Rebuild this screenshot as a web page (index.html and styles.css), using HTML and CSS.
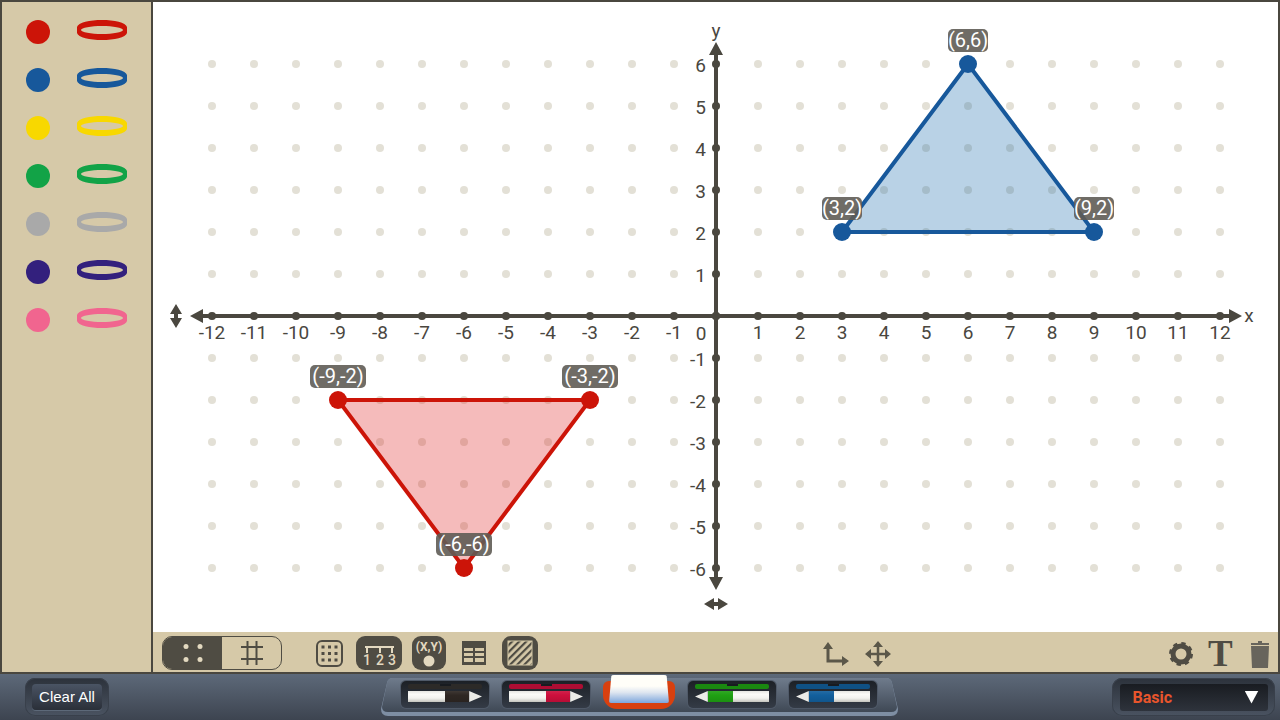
FILE: index.html
```html
<!DOCTYPE html>
<html lang="en">

<head>
    <meta charset="UTF-8">
    <title>Coordinate Graph</title>
    <link rel="stylesheet" href="styles.css">
</head>

<body>
    <svg class="defs" width="0" height="0">
        <defs>
            <symbol id="ring" viewBox="0 0 50 20">
                <path fill="currentColor" fill-rule="evenodd" d="M0 7C1 2.500 13 0 25 0S49 2.500 50 7V13C49 17.500 37 20 25 20S1 17.500 0 13ZM4 10C4 7.800 14 6 25 6S46 7.800 46 10C46 12.200 36 14 25 14S4 12.200 4 10Z"/>
            </symbol>
        </defs>
    </svg>

    <div class="workspace">
        <!-- Colour palette -->
        <div class="palette">
            <div class="swatch red"><span class="dot"></span><svg class="ring"><use href="#ring"/></svg></div>
            <div class="swatch blue"><span class="dot"></span><svg class="ring"><use href="#ring"/></svg></div>
            <div class="swatch yellow"><span class="dot"></span><svg class="ring"><use href="#ring"/></svg></div>
            <div class="swatch green"><span class="dot"></span><svg class="ring"><use href="#ring"/></svg></div>
            <div class="swatch gray"><span class="dot"></span><svg class="ring"><use href="#ring"/></svg></div>
            <div class="swatch purple"><span class="dot"></span><svg class="ring"><use href="#ring"/></svg></div>
            <div class="swatch pink"><span class="dot"></span><svg class="ring"><use href="#ring"/></svg></div>
        </div>

        <div class="main">
            <!-- Graph, viewBox uses page coordinates -->
            <svg class="graph" viewBox="153 2 1125 630">
                <defs>
                    <pattern id="grid-dots" x="191" y="43" width="42" height="42" patternUnits="userSpaceOnUse">
                        <circle cx="21" cy="21" r="4" fill="#e3e0d6"/>
                    </pattern>
                    <pattern id="x-ticks" x="191" y="306" width="42" height="20" patternUnits="userSpaceOnUse">
                        <circle cx="21" cy="10" r="4" fill="#4a473f"/>
                    </pattern>
                    <pattern id="y-ticks" x="706" y="43" width="20" height="42" patternUnits="userSpaceOnUse">
                        <circle cx="10" cy="21" r="4" fill="#4a473f"/>
                    </pattern>
                </defs>

                <rect x="191" y="43" width="1050" height="546" fill="url(#grid-dots)"/>

                <polygon class="tri-blue" points="968,64 842,232 1094,232"/>
                <polygon class="tri-red" points="338,400 590,400 464,568"/>

                <!-- Axes -->
                <rect x="191" y="306" width="1050" height="20" fill="url(#x-ticks)"/>
                <rect x="706" y="43" width="20" height="546" fill="url(#y-ticks)"/>
                <path class="axis" d="M198 316H1234M716 50V582"/>
                <path class="arrow" d="M190 316L203 309V323ZM1242 316L1229 309V323ZM716 42L709 55H723ZM716 590L709 577H723Z"/>
                <path class="arrow" d="M176 304L182 314H178V318H182L176 328L170 318H174V314H170ZM704 604L714 598V602H718V598L728 604L718 610V606H714V610Z"/>

                <g class="nums-x">
                    <text x="212" y="339">-12</text><text x="254" y="339">-11</text><text x="296" y="339">-10</text>
                    <text x="338" y="339">-9</text><text x="380" y="339">-8</text><text x="422" y="339">-7</text>
                    <text x="464" y="339">-6</text><text x="506" y="339">-5</text><text x="548" y="339">-4</text>
                    <text x="590" y="339">-3</text><text x="632" y="339">-2</text><text x="674" y="339">-1</text>
                    <text x="701" y="340">0</text>
                    <text x="758" y="339">1</text><text x="800" y="339">2</text><text x="842" y="339">3</text>
                    <text x="884" y="339">4</text><text x="926" y="339">5</text><text x="968" y="339">6</text>
                    <text x="1010" y="339">7</text><text x="1052" y="339">8</text><text x="1094" y="339">9</text>
                    <text x="1136" y="339">10</text><text x="1178" y="339">11</text><text x="1220" y="339">12</text>
                    <text x="1249" y="322">x</text>
                    <text x="716" y="37">y</text>
                </g>
                <g class="nums-y">
                    <text x="706" y="72">6</text><text x="706" y="114">5</text><text x="706" y="156">4</text>
                    <text x="706" y="198">3</text><text x="706" y="240">2</text><text x="706" y="282">1</text>
                    <text x="706" y="366">-1</text><text x="706" y="408">-2</text><text x="706" y="450">-3</text>
                    <text x="706" y="492">-4</text><text x="706" y="534">-5</text><text x="706" y="576">-6</text>
                </g>

                <g class="pts-blue">
                    <circle cx="968" cy="64" r="9"/><circle cx="842" cy="232" r="9"/><circle cx="1094" cy="232" r="9"/>
                </g>
                <g class="pts-red">
                    <circle cx="338" cy="400" r="9"/><circle cx="590" cy="400" r="9"/><circle cx="464" cy="568" r="9"/>
                </g>

                <g class="point-labels">
                    <rect x="948" y="29" width="40" height="23" rx="5"/><text x="968" y="47">(6,6)</text>
                    <rect x="822" y="197" width="40" height="23" rx="5"/><text x="842" y="215">(3,2)</text>
                    <rect x="1074" y="197" width="40" height="23" rx="5"/><text x="1094" y="215">(9,2)</text>
                    <rect x="310" y="365" width="56" height="23" rx="5"/><text x="338" y="383">(-9,-2)</text>
                    <rect x="562" y="365" width="56" height="23" rx="5"/><text x="590" y="383">(-3,-2)</text>
                    <rect x="436" y="533" width="56" height="23" rx="5"/><text x="464" y="551">(-6,-6)</text>
                </g>
            </svg>

            <!-- Graph tools -->
            <div class="toolbar">
                <div class="seg">
                    <div class="seg-item active">
                        <svg width="24" height="20" viewBox="0 0 24 20"><circle cx="5" cy="3.500" r="2.500"/><circle cx="19" cy="3.500" r="2.500"/><circle cx="5" cy="16.500" r="2.500"/><circle cx="19" cy="16.500" r="2.500"/></svg>
                    </div>
                    <div class="seg-item">
                        <svg width="24" height="24" viewBox="0 0 24 24"><path d="M7.500 0V24M16.500 0V24M1 6H23M1 18H23"/></svg>
                    </div>
                </div>

                <svg class="tool t-grid" width="27" height="34" viewBox="0 0 27 34">
                    <rect x="1" y="5" width="25" height="25" rx="5" fill="none" stroke="#4f4c43" stroke-width="2"/>
                    <path stroke="#4f4c43" stroke-width="3" stroke-dasharray="3 3.500" d="M5.500 11H22M5.500 17.500H22M5.500 24H22"/>
                </svg>

                <svg class="tool t-ruler" width="46" height="34" viewBox="0 0 46 34">
                    <rect width="46" height="34" rx="9" fill="#4f4c43"/>
                    <path stroke="#e3d9c0" stroke-width="2" fill="none" d="M9 11H38M11 11V17M24 11V17M36 11V17"/>
                    <text class="tool-num" x="11" y="29">1</text><text class="tool-num" x="24" y="29">2</text><text class="tool-num" x="36" y="29">3</text>
                </svg>

                <svg class="tool t-xy" width="34" height="34" viewBox="0 0 34 34">
                    <rect width="34" height="34" rx="9" fill="#4f4c43"/>
                    <text class="tool-xy" x="17" y="15">(X,Y)</text>
                    <circle cx="17" cy="25" r="5.500" fill="#e3d9c0"/>
                </svg>

                <svg class="tool t-table" width="24" height="34" viewBox="0 0 24 34">
                    <rect y="5" width="24" height="24" fill="#4f4c43"/>
                    <path fill="#d6c9a8" d="M2 12H11V15H2ZM13 12H22V15H13ZM2 17H11V20H2ZM13 17H22V20H13ZM2 22H11V26H2ZM13 22H22V26H13Z"/>
                </svg>

                <svg class="tool t-hatch" width="36" height="34" viewBox="0 0 36 34">
                    <defs>
                        <pattern id="hatch" width="5" height="5" patternUnits="userSpaceOnUse" patternTransform="rotate(45)">
                            <rect width="5" height="5" fill="#d6c9a8"/>
                            <rect width="2.200" height="5" fill="#4f4c43"/>
                        </pattern>
                    </defs>
                    <rect width="36" height="34" rx="9" fill="#4f4c43"/>
                    <rect x="6" y="5" width="24" height="24" fill="url(#hatch)" stroke="#d6c9a8" stroke-width="1"/>
                </svg>

                <svg class="tool t-axes" width="28" height="34" viewBox="0 0 28 34">
                    <path fill="none" stroke="#5b5749" stroke-width="3" d="M5 10V25H21"/>
                    <path fill="#5b5749" d="M5 6L10 13H0ZM26 25L19 20V30Z"/>
                </svg>

                <svg class="tool t-move" width="28" height="34" viewBox="0 0 28 34">
                    <path fill="none" stroke="#5b5749" stroke-width="2.500" d="M14 8V28M4 18H24"/>
                    <path fill="#5b5749" d="M14 5L19 11H9ZM14 31L19 25H9ZM1 18L7 13V23ZM27 18L21 13V23Z"/>
                </svg>

                <div class="tools-right">
                    <svg width="24" height="34" viewBox="0 0 24 34">
                        <circle cx="12" cy="18" r="8" fill="none" stroke="#4f4c43" stroke-width="5"/>
                        <circle cx="12" cy="18" r="10.500" fill="none" stroke="#4f4c43" stroke-width="3" stroke-dasharray="4.200 4.047"/>
                    </svg>
                    <span class="text-tool">T</span>
                    <svg width="20" height="34" viewBox="0 0 20 34">
                        <path fill="#67645c" d="M8 5H12V7H19V9H1V7H8ZM1 10H19L18 32H2Z"/>
                    </svg>
                </div>
            </div>
        </div>
    </div>

    <!-- Bottom bar -->
    <div class="bottom-bar">
        <div class="clear-wrap"><button class="clear-btn" type="button">Clear All</button></div>

        <div class="tray">
            <svg class="tray-bg" width="517" height="40" viewBox="0 0 517 40">
                <defs>
                    <linearGradient id="tray-fill" x1="0" y1="0" x2="0" y2="1">
                        <stop offset="0" stop-color="#6f7b8c"/>
                        <stop offset="1" stop-color="#3f4855"/>
                    </linearGradient>
                </defs>
                <path fill="#7e8ea3" d="M12 1H505Q510 1 511 6L517 32Q517 39 510 39H7Q0 39 0 32L6 6Q7 1 12 1Z"/>
                <path fill="url(#tray-fill)" d="M12 1H505Q510 1 511 6L516 30Q516 35 510 35H7Q1 35 1 30L6 6Q7 1 12 1Z"/>
            </svg>
            <div class="slot black">
                <span class="cap"></span>
                <div class="pen"><span class="barrel"></span><span class="band"></span><span class="tip"></span></div>
            </div>
            <div class="slot crimson">
                <span class="cap"></span>
                <div class="pen"><span class="barrel"></span><span class="band"></span><span class="tip"></span></div>
            </div>
            <div class="eraser-slot"><div class="eraser"></div></div>
            <div class="slot lime">
                <span class="cap"></span>
                <div class="pen flip"><span class="barrel"></span><span class="band"></span><span class="tip"></span></div>
            </div>
            <div class="slot ocean">
                <span class="cap"></span>
                <div class="pen flip"><span class="barrel"></span><span class="band"></span><span class="tip"></span></div>
            </div>
        </div>

        <div class="select-wrap">
            <div class="select-box">
                <span class="select-label">Basic</span>
                <span class="select-arrow"></span>
            </div>
        </div>
    </div>
</body>
</html>
```

FILE: styles.css
```css
/* General Styling */
body {
    margin: 0;
    width: 1280px;
    height: 720px;
    overflow: hidden;
    font-family: "Liberation Sans", Arial, sans-serif;
    background-color: #3f4753;
}

.defs {
    position: absolute;
}

.workspace {
    display: flex;
    box-sizing: border-box;
    height: 674px;
    border: 2px solid #4a473f;
    background-color: #d6c9a8;
}

/* Palette */
.palette {
    width: 149px;
    flex-shrink: 0;
    padding-top: 6px;
    border-right: 2px solid #4a473f;
}

.swatch {
    display: flex;
    align-items: center;
    height: 48px;
    padding-left: 24px;
}

.swatch .dot {
    width: 24px;
    height: 24px;
    border-radius: 50%;
    background-color: currentColor;
}

.swatch .ring {
    width: 50px;
    height: 20px;
    margin: -4px 0 0 27px;
}

.red { color: #cc1408; }
.blue { color: #17589b; }
.yellow { color: #f8d800; }
.green { color: #12a347; }
.gray { color: #a9a9a9; }
.purple { color: #33207d; }
.pink { color: #f1658f; }

/* Graph */
.main {
    flex: 1;
    display: flex;
    flex-direction: column;
    min-width: 0;
}

.graph {
    display: block;
    width: 1125px;
    height: 630px;
    background-color: #fff;
}

.axis {
    fill: none;
    stroke: #4a473f;
    stroke-width: 4;
}

.arrow {
    fill: #4a473f;
}

.nums-x text,
.nums-y text {
    font-family: Roboto, sans-serif;
    font-size: 19px;
    fill: #4a473f;
}

.nums-x text {
    text-anchor: middle;
}

.nums-y text {
    text-anchor: end;
}

.tri-blue {
    fill: rgba(30, 110, 175, 0.31);
    stroke: #17589b;
    stroke-width: 4;
}

.tri-red {
    fill: rgba(220, 20, 20, 0.29);
    stroke: #cc1408;
    stroke-width: 4;
}

.pts-blue {
    fill: #17589b;
}

.pts-red {
    fill: #cc1408;
}

.point-labels rect {
    fill: #5f5c55;
    opacity: 0.9;
}

.point-labels text {
    font-family: Roboto, sans-serif;
    font-size: 20px;
    text-anchor: middle;
    fill: #fff;
}

/* Toolbar */
.toolbar {
    flex: 1;
    display: flex;
    align-items: flex-start;
    box-sizing: border-box;
    padding: 4px 0 0 9px;
}

.seg {
    display: flex;
    box-sizing: border-box;
    width: 120px;
    height: 34px;
    border: 1px solid #4f4c43;
    border-radius: 10px;
    overflow: hidden;
}

.seg-item {
    flex: 1;
    display: flex;
    align-items: center;
    justify-content: center;
}

.seg-item path {
    fill: none;
    stroke: #4f4c43;
    stroke-width: 2;
}

.seg-item.active {
    background-color: #4f4c43;
}

.seg-item.active circle {
    fill: #e3d9c0;
}

.tool {
    flex-shrink: 0;
}

.t-grid { margin-left: 34px; }
.t-ruler { margin-left: 13px; }
.t-xy { margin-left: 10px; }
.t-table { margin-left: 16px; }
.t-hatch { margin-left: 16px; }
.t-axes { margin-left: 285px; }
.t-move { margin-left: 13px; }

.tool-num {
    font-family: Roboto, sans-serif;
    font-size: 14px;
    font-weight: 500;
    text-anchor: middle;
    fill: #e3d9c0;
}

.tool-xy {
    font-family: Roboto, sans-serif;
    font-size: 12px;
    font-weight: 700;
    text-anchor: middle;
    fill: #e3d9c0;
}

.tools-right {
    display: flex;
    align-items: flex-start;
    gap: 15px;
    margin-left: auto;
    margin-right: 8px;
}

.text-tool {
    width: 27px;
    height: 34px;
    font-family: "Liberation Serif", serif;
    font-size: 37px;
    font-weight: 700;
    line-height: 35px;
    color: #4f4c43;
}

/* Bottom bar */
.bottom-bar {
    display: flex;
    align-items: center;
    box-sizing: border-box;
    height: 46px;
    padding: 0 5px 0 25px;
    background: linear-gradient(#5d6979, #3d4450);
}

.clear-wrap,
.select-wrap {
    display: flex;
    align-items: center;
    justify-content: center;
    box-sizing: border-box;
    height: 38px;
    border-radius: 10px;
    background: linear-gradient(#2c323b, #4a5361);
    box-shadow: inset 0 0 0 1px #39404b;
}

.clear-wrap {
    width: 84px;
}

.clear-btn {
    width: 70px;
    height: 26px;
    padding: 0 0 2px;
    border: none;
    border-radius: 4px;
    font-family: inherit;
    font-size: 15px;
    color: #fff;
    background: linear-gradient(#4a5464, #2a2f38);
    box-shadow: 0 1px 0 #5d6979;
}

/* Pen tray */
.tray {
    position: relative;
    display: flex;
    align-items: flex-start;
    gap: 13px;
    box-sizing: border-box;
    width: 517px;
    height: 40px;
    margin-left: 272px;
    padding: 4px 0 0 20px;
}

.tray-bg {
    position: absolute;
    top: 0;
    left: 0;
}

.slot {
    position: relative;
    box-sizing: border-box;
    width: 88px;
    height: 27px;
    padding: 3px 7px 0;
    border-radius: 5px;
    background: linear-gradient(#1c2026, #343b46);
    box-shadow: 0 0 0 1px #4f5968;
}

.cap {
    position: relative;
    display: block;
    height: 5px;
    border-radius: 2px;
    background-color: currentColor;
    filter: brightness(0.85);
}

.cap::after {
    content: "";
    position: absolute;
    top: 0;
    left: 32px;
    width: 11px;
    height: 2px;
    background-color: #1c2026;
}

.black .cap {
    background-color: #34312f;
}

.pen {
    display: flex;
    height: 11px;
    margin-top: 2px;
}

.pen.flip {
    flex-direction: row-reverse;
}

.barrel {
    width: 37px;
    background: linear-gradient(#e6e6e2, #fbfbf8 30%, #f2f2ee 65%, #c4c4be);
}

.band {
    width: 25px;
    background-color: currentColor;
    background-image: linear-gradient(rgba(255, 255, 255, 0.08), rgba(255, 255, 255, 0) 40%, rgba(0, 0, 0, 0.1));
}

.tip {
    width: 13px;
    background-color: #ecece8;
    clip-path: polygon(0 0, 100% 50%, 0 100%);
}

.flip .tip {
    clip-path: polygon(100% 0, 0 50%, 100% 100%);
}

.black { color: #2e2723; }
.crimson { color: #cc0f3c; }
.lime { color: #1fa013; }
.ocean { color: #125f9c; }

.eraser-slot {
    position: relative;
    box-sizing: border-box;
    width: 72px;
    height: 28px;
    padding: 0 6px;
    border-radius: 6px 6px 14px 14px;
    background-color: #d8400f;
}

.eraser {
    height: 28px;
    margin-top: -6px;
    border-radius: 5px 5px 2px 2px;
    background: linear-gradient(#fffef8 40%, #dfe6f0 62%, #7da6dc 100%);
    clip-path: polygon(4% 0, 96% 0, 100% 100%, 0 100%);
}

/* Mode select */
.select-wrap {
    width: 163px;
    margin-left: auto;
}

.select-box {
    display: flex;
    align-items: center;
    justify-content: space-between;
    box-sizing: border-box;
    width: 148px;
    height: 27px;
    padding: 0 9px 0 13px;
    border-radius: 3px;
    background: linear-gradient(#191c21, #2e333c);
}

.select-label {
    font-family: Roboto, sans-serif;
    font-size: 16px;
    font-weight: 700;
    color: #e8552c;
}

.select-arrow {
    width: 14px;
    height: 13px;
    background-color: #fff;
    clip-path: polygon(0 0, 100% 0, 50% 100%);
}
```
